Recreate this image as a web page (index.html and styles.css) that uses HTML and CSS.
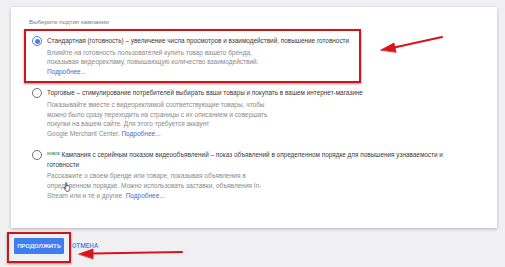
FILE: index.html
```html
<!DOCTYPE html>
<html lang="ru">
<head>
<meta charset="utf-8">
<link rel="stylesheet" href="styles.css">
</head>
<body>
<div class="page">
  <div class="card">
    <div class="label">Выберите подтип кампании</div>
    <div class="options">
      <div class="option">
        <span class="radio checked"></span>
        <div class="body">
          <div class="title">Стандартная (готовность) – увеличение числа просмотров и взаимодействий, повышение готовности</div>
          <div class="desc">Влияйте на готовность пользователей купить товар вашего бренда,<br>показывая видеорекламу, повышающую количество взаимодействий.<br><span class="link">Подробнее...</span></div>
        </div>
      </div>
      <div class="option">
        <span class="radio"></span>
        <div class="body">
          <div class="title">Торговые – стимулирование потребителей выбирать ваши товары и покупать в вашем интернет-магазине</div>
          <div class="desc">Показывайте вместе с видеорекламой соответствующие товары, чтобы<br>можно было сразу переходить на страницы с их описанием и совершать<br>покупки на вашем сайте. Для этого требуется аккаунт<br>Google Merchant Center. <span class="link">Подробнее...</span></div>
        </div>
      </div>
      <div class="option">
        <span class="radio"></span>
        <div class="body">
          <div class="title"><span class="new">НОВОЕ</span> Кампания с серийным показом видеообъявлений – показ объявлений в определенном порядке для повышения узнаваемости и<br>готовности</div>
          <div class="desc">Расскажите о своем бренде или товаре, показывая объявления в<br>определенном порядке. Можно использовать заставки, объявления In-<br>Stream или и те и другие. <span class="link">Подробнее...</span></div>
        </div>
      </div>
    </div>
  </div>
  <div class="footer">
    <span class="btn">ПРОДОЛЖИТЬ</span>
    <span class="cancel">ОТМЕНА</span>
  </div>
</div>
<div class="mark mark-1"></div>
<div class="mark mark-2"></div>
<svg class="cursor" width="8" height="10" viewBox="0 0 16 20">
  <path d="M5.5 1.6 Q6.5 0 7.5 1.6 V7.8 Q8.5 6.9 9.5 7.8 Q10.5 7.1 11.5 8.2 Q12.6 7.6 13.6 8.8 V13.2 Q13.6 16 11.6 18.6 H6.6 L2.2 12.6 Q1.8 11 3.3 11.3 L5.5 13.2 Z" fill="#fff" stroke="#222" stroke-width="1.3" stroke-linejoin="round"/>
</svg>
<svg class="arrows" width="505" height="267" viewBox="0 0 505 267">
  <g fill="#d8141c" stroke="#d8141c" stroke-linecap="round">
    <line x1="442" y1="37" x2="392" y2="48" stroke-width="2.2"/>
    <polygon points="381,50 394,43 396,52" stroke-width="0.8"/>
    <line x1="182" y1="252" x2="92" y2="253.5" stroke-width="2.2"/>
    <polygon points="79,254 93,249 93,258.5" stroke-width="0.8"/>
  </g>
</svg>
</body>
</html>
```
FILE: styles.css
```css
html, body {
  margin: 0;
  padding: 0;
}
body {
  width: 505px;
  height: 267px;
  overflow: hidden;
  background: #f0f0f2;
  font-family: "Liberation Sans", Arial, sans-serif;
  position: relative;
}
.page {
  padding-top: 7px;
}
.card {
  margin-left: 11px;
  width: 468px;
  height: 201px;
  padding: 10px 0 10px 18px;
  background: #fff;
  box-shadow: 0 1px 3px rgba(0,0,0,0.25);
}
.label {
  font-size: 6.2px;
  line-height: 9.6px;
  color: #7a7a7a;
}
.options {
  margin-top: 9.6px;
  padding-left: 3px;
}
.option {
  display: flex;
  gap: 5px;
  margin-bottom: 11.8px;
}
.radio {
  flex: none;
  box-sizing: border-box;
  width: 10px;
  height: 10px;
  border-radius: 50%;
  border: 1px solid #6f6f6f;
  display: flex;
  align-items: center;
  justify-content: center;
}
.radio.checked {
  border-color: #4a80e8;
}
.radio.checked::after {
  content: "";
  width: 5px;
  height: 5px;
  border-radius: 50%;
  background: #4a80e8;
}
.body {
  line-height: 9.6px;
}
.title {
  font-size: 6.4px;
  color: #3a3a3a;
}
.desc {
  font-size: 6.5px;
  margin-top: 2px;
  color: #8a8a8a;
}
.link {
  color: #3d6ed4;
}
.new {
  font-size: 3.5px;
  vertical-align: 2px;
  color: #2e9b5e;
  font-weight: 700;
}
.footer {
  display: flex;
  align-items: center;
  gap: 8px;
  padding: 10px 0 0 14px;
}
.btn {
  width: 50px;
  height: 16px;
  background: #3d7ff0;
  color: #fff;
  font-family: Roboto, sans-serif;
  font-size: 6.2px;
  font-weight: 500;
  display: flex;
  align-items: center;
  justify-content: center;
  border-radius: 1px;
}
.cancel {
  font-family: Roboto, sans-serif;
  font-size: 6.4px;
  font-weight: 500;
  color: #3d7ff0;
}
.mark {
  position: absolute;
  border: 2px solid #d0141d;
  box-shadow: 0 1px 2px rgba(80,0,0,0.45);
  box-sizing: border-box;
}
.mark-1 {
  left: 24px;
  top: 29px;
  width: 337px;
  height: 54px;
}
.mark-2 {
  left: 7px;
  top: 232px;
  width: 64px;
  height: 31px;
}
.cursor {
  position: absolute;
  left: 63px;
  top: 182px;
}
.arrows {
  position: absolute;
  left: 0;
  top: 0;
}
```
